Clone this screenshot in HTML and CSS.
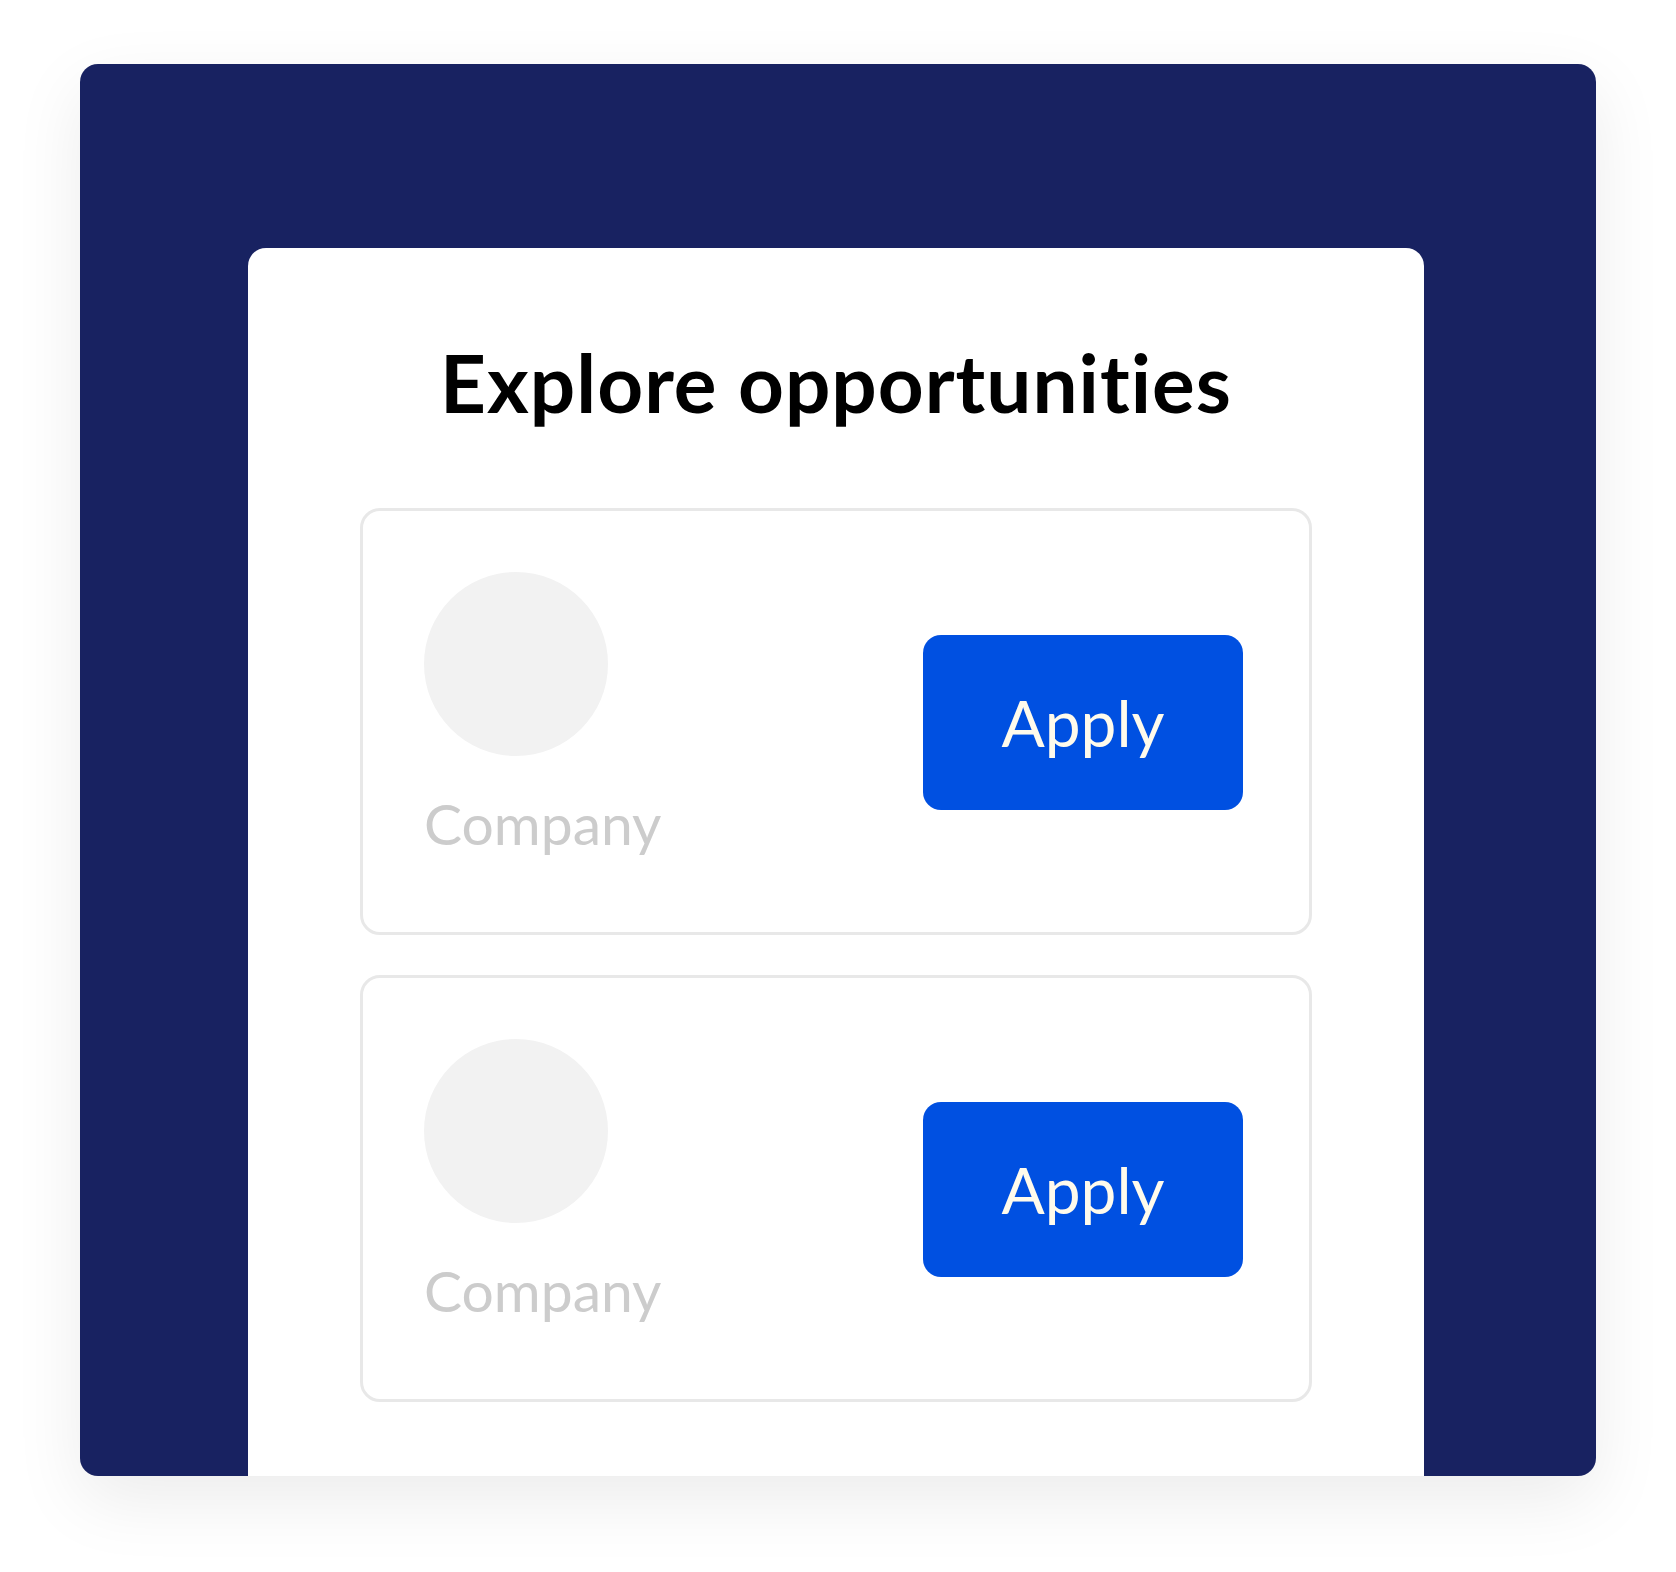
FILE: index.html
```html
<!DOCTYPE html>
<html lang="en">
<head>
<meta charset="utf-8">
<title>Explore opportunities</title>
<link rel="stylesheet" href="styles.css">
</head>
<body>
<div class="frame">
  <div class="outer">
    <div class="panel">
      <h1 class="title">Explore opportunities</h1>
      <div class="list">
        <div class="job">
          <div class="company">
            <div class="logo"></div>
            <div class="name">Company</div>
          </div>
          <button class="apply">Apply</button>
        </div>
        <div class="job">
          <div class="company">
            <div class="logo"></div>
            <div class="name">Company</div>
          </div>
          <button class="apply">Apply</button>
        </div>
      </div>
    </div>
  </div>
</div>
</body>
</html>
```

FILE: styles.css
```css
html, body {
  margin: 0;
  padding: 0;
  background: #ffffff;
}

body {
  font-family: "Lato", "Inter", "Liberation Sans", sans-serif;
}

.frame {
  padding: 64px 80px 96px;
}

.outer {
  height: 1412px;
  box-sizing: border-box;
  background: #182261;
  border-radius: 18px;
  padding: 184px 172px 0 168px;
  display: flex;
  flex-direction: column;
  overflow: hidden;
  box-shadow: 0 24px 70px rgba(0, 0, 0, 0.08);
}

.panel {
  flex: 1;
  background: #ffffff;
  border-radius: 18px 18px 0 0;
  padding: 86px 112px 0;
}

.title {
  margin: 0;
  text-align: center;
  font-size: 80px;
  font-weight: 700;
  line-height: 96px;
  color: #000000;
  letter-spacing: 1px;
}

.list {
  margin-top: 78px;
  display: flex;
  flex-direction: column;
  gap: 40px;
}

.job {
  height: 427px;
  box-sizing: border-box;
  border: 3px solid #e8e8e8;
  border-radius: 20px;
  padding: 61px 66px 0 61px;
  display: flex;
  justify-content: space-between;
  align-items: flex-start;
}

.company {
  display: flex;
  flex-direction: column;
  align-items: flex-start;
}

.logo {
  width: 184px;
  height: 184px;
  border-radius: 50%;
  background: #f2f2f2;
}

.name {
  margin-top: 32px;
  font-size: 57px;
  line-height: 70px;
  color: #cccccc;
  font-weight: 400;
}

.apply {
  margin-top: 63px;
  width: 320px;
  height: 175px;
  border: none;
  border-radius: 18px;
  background: #0050e1;
  color: #fffbec;
  font-family: inherit;
  font-size: 64px;
  font-weight: 400;
  padding: 0;
  cursor: pointer;
}
```
